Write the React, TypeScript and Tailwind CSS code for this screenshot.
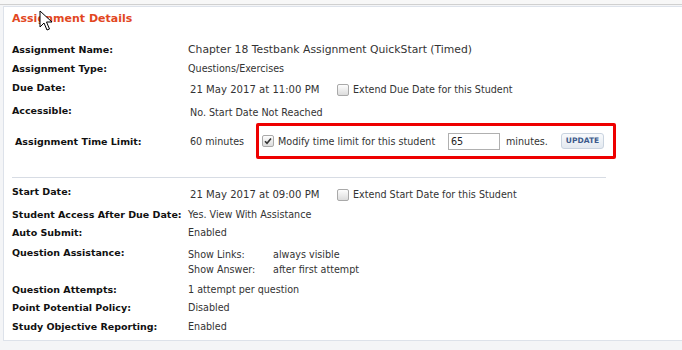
import React from 'react'

const font = { fontFamily: '"DejaVu Sans", Verdana, sans-serif' }

function Box({ checked = false }: { checked?: boolean }) {
  return (
    <span className="inline-flex h-[12px] w-[12px] shrink-0 items-center justify-center rounded-[2px] border border-[#a9a9a9] bg-gradient-to-b from-[#fdfdfd] to-[#dcdcdc]">
      {checked && (
        <svg width="8" height="8" viewBox="0 0 8 8">
          <path d="M1 4.2 L3 6.3 L7 1.5" fill="none" stroke="#333" strokeWidth="1.6" />
        </svg>
      )}
    </span>
  )
}

function Row({ label, children, className = '' }: { label: string; children?: React.ReactNode; className?: string }) {
  return (
    <div className={`flex whitespace-nowrap ${className}`}>
      <div className="w-[176px] shrink-0 text-[9.5px] font-bold text-[#111]">{label}</div>
      <div className="text-[#333]">{children}</div>
    </div>
  )
}

export default function App() {
  return (
    <div className="relative h-[350px] w-[682px] overflow-hidden bg-[#f4f5f7] text-[9.6px] leading-[13px]" style={font}>
      <div className="h-[5px] border-b border-[#d0d0d0] bg-[#f7f7f7]" />
      <div className="ml-[3px] mt-[1px] h-[335px] border-l border-b border-t border-[#dde2ea] bg-white pl-[8px] pt-[4px]">
        <h2 className="text-[11px] font-bold leading-[16px] text-[#e2471f]">Assignment Details</h2>

        <div className="mt-[16px] flex flex-col">
          <Row label="Assignment Name:">
            <span className="text-[10.8px]">Chapter 18 Testbank Assignment QuickStart (Timed)</span>
          </Row>
          <Row label="Assignment Type:" className="mt-[6px]">Questions/Exercises</Row>
          <Row label="Due Date:" className="mt-[6px]">
            <div className="ml-[2px] mt-[2px] flex items-center">
              <span className="w-[147px] text-[10.1px]">21 May 2017 at 11:00 PM</span>
              <Box />
              <span className="ml-[4px]">Extend Due Date for this Student</span>
            </div>
          </Row>
          <Row label="Accessible:" className="mt-[8px]">
            <div className="ml-[2px] mt-[2px]">No. Start Date Not Reached</div>
          </Row>

          <div className="mt-[4px] flex items-center whitespace-nowrap">
            <div className="w-[178px] shrink-0 pl-[3px] text-[9.5px] font-bold text-[#111]">Assignment Time Limit:</div>
            <span className="w-[66px] text-[#333]">60 minutes</span>
            <div className="flex h-[36px] w-[360px] items-center rounded-[2px] border-[3px] border-[#ee0000] pl-[3px] text-[#333]">
              <Box checked />
              <span className="ml-[4px] w-[170px]">Modify time limit for this student</span>
              <span className="flex h-[17px] w-[52px] items-center border border-[#b0b0b0] pl-[2px] text-[#222]">65</span>
              <span className="ml-[6px] w-[55px]">minutes.</span>
              <button className="h-[16px] w-[43px] rounded-[3px] border border-[#c9d3df] bg-gradient-to-b from-[#f8fafc] to-[#e3e9f0] text-[7.5px] font-bold leading-[14px] text-[#3c5a8c]">
                UPDATE
              </button>
            </div>
          </div>

          <div className="mt-[18px] h-px w-[594px] bg-[#d7dce4]" />

          <Row label="Start Date:" className="mt-[7px]">
            <div className="ml-[2px] mt-[3px] flex items-center">
              <span className="w-[147px] text-[10.1px]">21 May 2017 at 09:00 PM</span>
              <Box />
              <span className="ml-[4px]">Extend Start Date for this Student</span>
            </div>
          </Row>
          <Row label="Student Access After Due Date:" className="mt-[7px]">Yes. View With Assistance</Row>
          <Row label="Auto Submit:" className="mt-[5px]">Enabled</Row>
          <Row label="Question Assistance:" className="mt-[7px]">
            <div className="mt-[2px] grid grid-cols-[85px_auto] gap-y-[2px]">
              <span>Show Links:</span>
              <span>always visible</span>
              <span>Show Answer:</span>
              <span>after first attempt</span>
            </div>
          </Row>
          <Row label="Question Attempts:" className="mt-[7px]">1 attempt per question</Row>
          <Row label="Point Potential Policy:" className="mt-[5px]">Disabled</Row>
          <Row label="Study Objective Reporting:" className="mt-[6px]">Enabled</Row>
        </div>
      </div>

      <svg className="absolute left-[39px] top-[10px]" width="14" height="22" viewBox="0 0 14 22">
        <path d="M1 1 L1 17 L5 13 L8 20 L10.5 19 L7.5 12 L13 12 Z" fill="#fff" stroke="#000" strokeWidth="1" strokeLinejoin="round" />
      </svg>
    </div>
  )
}
